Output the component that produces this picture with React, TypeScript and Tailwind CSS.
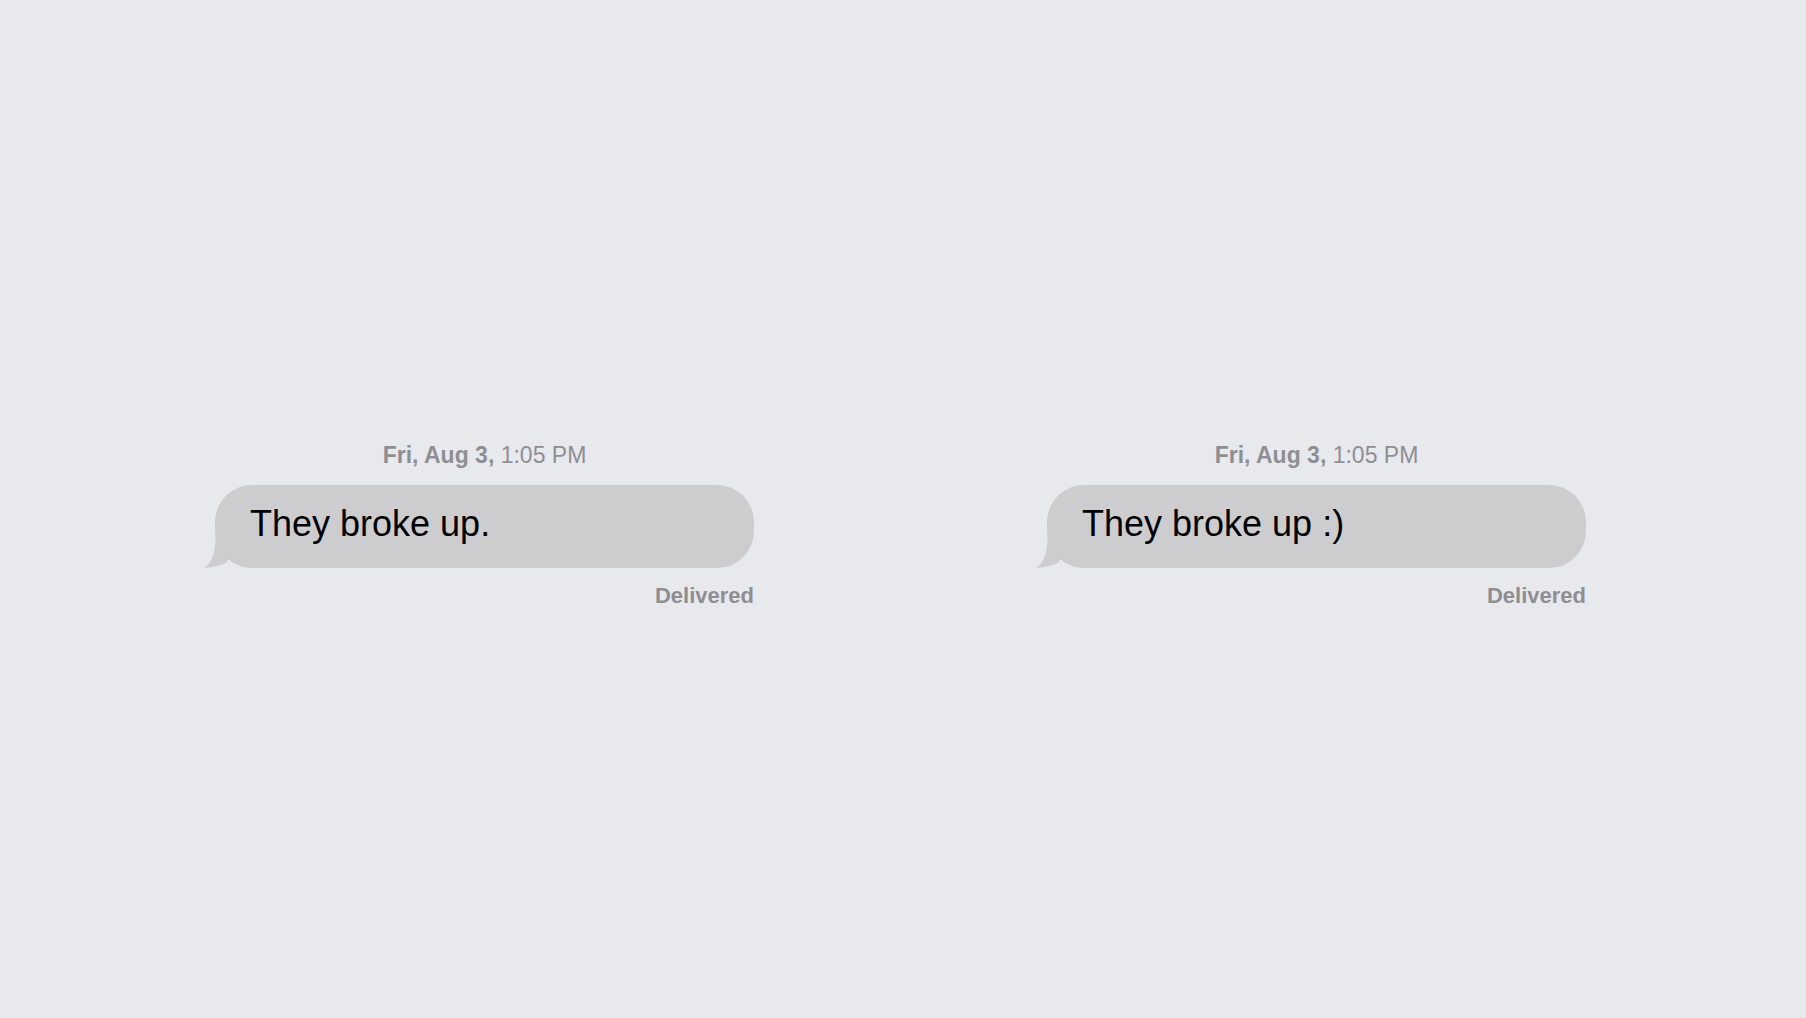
import React from "react";

function Message({ text }: { text: string }) {
  return (
    <div className="flex w-[539px] flex-col">
      <div className="text-center text-[23px] leading-[26px] text-[#8e8e93]">
        <span className="font-bold">Fri, Aug 3,</span> 1:05 PM
      </div>
      <div className="relative mt-[17px] flex h-[83px] items-center rounded-[37px] bg-[#cdcdcf] pb-[5px] pl-[35px]">
        <svg
          className="absolute left-[-15px] top-[37px]"
          width="45"
          height="50"
          viewBox="0 0 45 50"
        >
          <path d="M16,2 C16,30 13,40 4,46 Q15,45.5 26,41 L40,20 L16,2 Z" fill="#cdcdcf" />
        </svg>
        <span className="relative text-[36px] leading-none text-black">{text}</span>
      </div>
      <div className="mt-[15px] text-right text-[22px] font-bold leading-[26px] text-[#8e8e93]">
        Delivered
      </div>
    </div>
  );
}

export default function App() {
  return (
    <div
      className="flex h-[1018px] w-[1806px] items-start gap-[293px] bg-[#e8e9ed] pl-[215px] pt-[442px]"
      style={{ fontFamily: '"Liberation Sans", Arial, Helvetica, sans-serif' }}
    >
      <Message text="They broke up." />
      <Message text="They broke up :)" />
    </div>
  );
}
